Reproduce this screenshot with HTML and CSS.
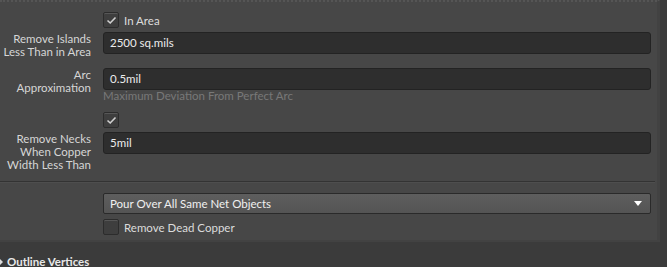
FILE: index.html
```html
<!DOCTYPE html>
<html lang="en">

<head>
  <meta charset="UTF-8" />
  <title>Polygon Pour Properties</title>
  <link rel="stylesheet" href="styles.css">
</head>

<body>
  <div class="panel">
    <div class="row row-first">
      <div class="label"></div>
      <label class="check">
        <span class="box on">
          <svg width="11" height="9" viewBox="0 0 11 9"><path d="M1.5 4.5 L4.2 7 L9.5 1.5" fill="none" stroke="#d0d0d0" stroke-width="1.6"/></svg>
        </span>
        In Area
      </label>
    </div>

    <div class="row row-islands">
      <div class="label">Remove Islands<br />Less Than in Area</div>
      <div class="field">
        <div class="input">2500 sq.mils</div>
      </div>
    </div>

    <div class="row row-arc">
      <div class="label">Arc<br />Approximation</div>
      <div class="field">
        <div class="input">0.5mil</div>
        <div class="hint">Maximum Deviation From Perfect Arc</div>
      </div>
    </div>

    <div class="row row-neck-check">
      <div class="label"></div>
      <label class="check">
        <span class="box on">
          <svg width="11" height="9" viewBox="0 0 11 9"><path d="M1.5 4.5 L4.2 7 L9.5 1.5" fill="none" stroke="#d0d0d0" stroke-width="1.6"/></svg>
        </span>
      </label>
    </div>

    <div class="row row-necks">
      <div class="label">Remove Necks<br />When Copper<br />Width Less Than</div>
      <div class="field">
        <div class="input">5mil</div>
      </div>
    </div>

    <div class="separator"></div>

    <div class="row row-pour">
      <div class="label"></div>
      <div class="select">
        <span>Pour Over All Same Net Objects</span>
        <span class="arrow"></span>
      </div>
    </div>

    <div class="row row-dead">
      <div class="label"></div>
      <label class="check">
        <span class="box"></span>
        Remove Dead Copper
      </label>
    </div>
  </div>

  <div class="section-title"><span class="caret"></span>Outline Vertices</div>
</body>

</html>
```

FILE: styles.css
```css
body {
  margin: 0;
  background-color: #3b3b3b;
  font-family: Lato, "Liberation Sans", sans-serif;
  font-size: 11.5px;
  color: #dcdcdc;
}

.panel {
  width: 657px;
  background-color: #474747;
  border-top: 2px dotted #555;
  border-right: 3px solid #424242;
  border-bottom: 2px solid #424242;
  padding-bottom: 5px;
}

.row {
  display: grid;
  grid-template-columns: 91px 1fr;
  column-gap: 12px;
  align-items: start;
  padding-right: 6px;
}

.row-first { margin-top: 10px; }
.row-islands { margin-top: 4px; }
.row-arc { margin-top: 10px; }
.row-neck-check { margin-top: 10px; }
.row-necks { margin-top: 4px; }
.row-pour { margin-top: 10px; }
.row-dead { margin-top: 5px; }

.label {
  text-align: right;
  line-height: 13px;
  white-space: nowrap;
  color: #d6d6d6;
}

.input {
  height: 20px;
  line-height: 20px;
  background-color: #2e2e2e;
  border: 1px solid #232323;
  border-radius: 3px;
  padding-left: 6px;
  color: #ececec;
}

.hint {
  color: #787878;
  line-height: 12px;
}

.check {
  display: flex;
  align-items: center;
  gap: 5px;
  height: 16px;
  color: #dcdcdc;
}

.box {
  width: 14px;
  height: 14px;
  border: 1px solid #2c2c2c;
  border-radius: 2px;
  background-color: #3e3e3e;
  box-shadow: inset 0 1px 0 #575757;
  display: flex;
  align-items: center;
  justify-content: center;
}

.separator {
  height: 1px;
  background-color: #333;
  border-bottom: 1px solid #4e4e4e;
  margin-top: 10px;
  margin-right: 2px;
}

.select {
  height: 19px;
  line-height: 19px;
  border: 1px solid #2a2a2a;
  border-radius: 2px;
  background: linear-gradient(#5e5e5e, #545454);
  padding-left: 6px;
  padding-right: 8px;
  color: #f0f0f0;
  display: flex;
  justify-content: space-between;
  align-items: center;
}

.arrow {
  width: 0;
  height: 0;
  border-left: 4px solid transparent;
  border-right: 4px solid transparent;
  border-top: 5px solid #fff;
}

.section-title {
  margin-top: 13px;
  font-weight: bold;
  color: #e8e8e8;
  display: flex;
  align-items: center;
  gap: 4px;
  line-height: 14px;
}

.caret {
  width: 0;
  height: 0;
  border-top: 3px solid transparent;
  border-bottom: 3px solid transparent;
  border-left: 3px solid #ddd;
}
```
